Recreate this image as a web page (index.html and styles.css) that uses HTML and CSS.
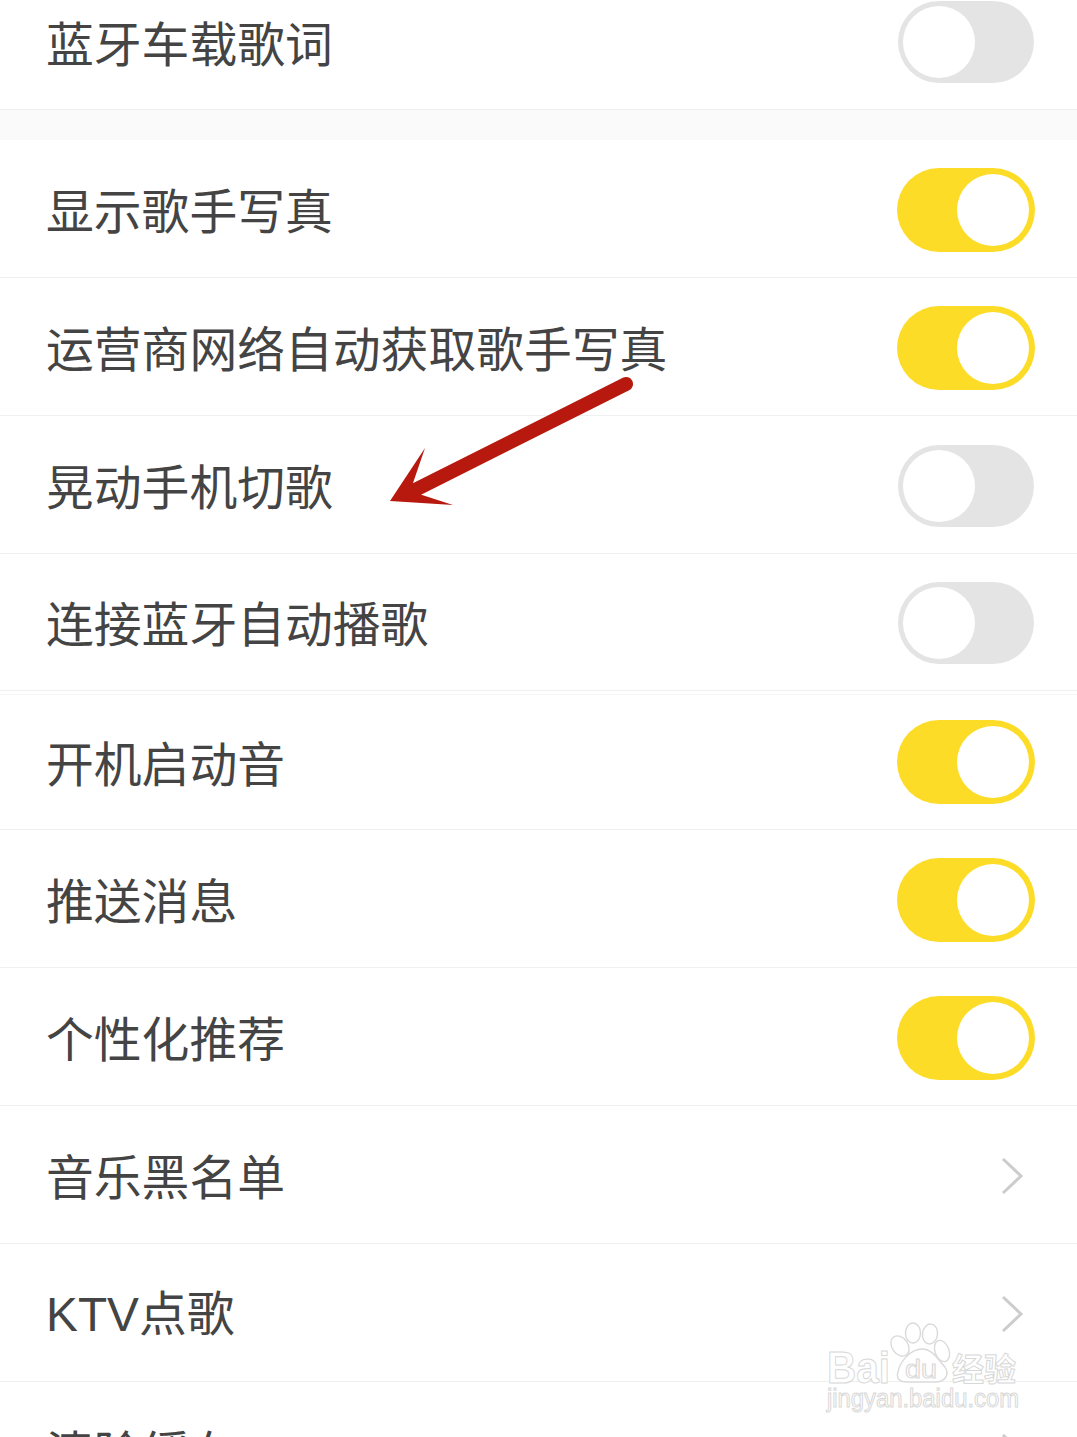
FILE: index.html
```html
<!DOCTYPE html>
<html lang="zh-CN">
<head>
<meta charset="utf-8">
<title>设置</title>
<link rel="stylesheet" href="styles.css">
</head>
<body>
<div class="page">
  <div class="list">
    <div class="row row-first"><span class="label">蓝牙车载歌词</span><span class="switch off"><i class="knob"></i></span></div>
  </div>
  <div class="gap"></div>
  <div class="list">
    <div class="row"><span class="label">显示歌手写真</span><span class="switch on"><i class="knob"></i></span></div>
    <div class="row"><span class="label">运营商网络自动获取歌手写真</span><span class="switch on"><i class="knob"></i></span></div>
    <div class="row"><span class="label">晃动手机切歌</span><span class="switch off"><i class="knob"></i></span></div>
    <div class="row row-short"><span class="label">连接蓝牙自动播歌</span><span class="switch off"><i class="knob"></i></span></div>
    <div class="row row-seam"><span class="label">开机启动音</span><span class="switch on"><i class="knob"></i></span></div>
    <div class="row"><span class="label">推送消息</span><span class="switch on"><i class="knob"></i></span></div>
    <div class="row"><span class="label">个性化推荐</span><span class="switch on"><i class="knob"></i></span></div>
    <div class="row"><span class="label">音乐黑名单</span><svg class="chev" viewBox="0 0 24 38"><path d="M3 2 L21 19 L3 36"/></svg></div>
    <div class="row"><span class="label"><span class="latin">KTV</span>点歌</span><svg class="chev" viewBox="0 0 24 38"><path d="M3 2 L21 19 L3 36"/></svg></div>
    <div class="row"><span class="label">清除缓存</span><svg class="chev" viewBox="0 0 24 38"><path d="M3 2 L21 19 L3 36"/></svg></div>
  </div>

  <svg class="arrow" viewBox="0 0 260 140">
    <path class="arrow-head" d="M5 126 L40 73 L28 108 L34 119 L68 130 Z"/>
    <line class="arrow-shaft" x1="241" y1="9" x2="30" y2="115"/>
  </svg>

  <svg class="mark" viewBox="0 0 200 100">
    <g class="paw">
      <ellipse cx="73" cy="21" rx="8" ry="11" transform="rotate(-35 73 21)"/>
      <ellipse cx="86" cy="8" rx="7.5" ry="10"/>
      <ellipse cx="103" cy="9" rx="7.5" ry="10" transform="rotate(8 103 9)"/>
      <ellipse cx="115" cy="26" rx="7" ry="11" transform="rotate(-20 115 26)"/>
      <path d="M71 47 C73 36 84 24 95 24 C106 24 112 36 118 42 C123 50 118 57 108 57 L80 57 C72 57 69 53 71 47 Z"/>
    </g>
    <text class="mark-big" x="0" y="58" textLength="63" lengthAdjust="spacingAndGlyphs">Bai</text>
    <text class="mark-du" x="78" y="53" textLength="32" lengthAdjust="spacingAndGlyphs">du</text>
    <text class="mark-cn" x="125" y="56" textLength="64" lengthAdjust="spacingAndGlyphs">经验</text>
    <text class="mark-url" x="0" y="82" textLength="192" lengthAdjust="spacingAndGlyphs">jingyan.baidu.com</text>
  </svg>
</div>
</body>
</html>
```
FILE: styles.css
```css
html, body {
  margin: 0;
  padding: 0;
  background: #fff;
}
.page {
  position: relative;
  width: 1077px;
  height: 1437px;
  overflow: hidden;
  font-family: "Noto Sans CJK SC", "Noto Sans", sans-serif;
  color: #444;
}
.list {
  display: flex;
  flex-direction: column;
}
.row {
  display: flex;
  align-items: center;
  justify-content: space-between;
  flex: none;
  height: 137px;
  padding: 0 42px 0 46px;
  border-bottom: 1px solid #f0f0f0;
  background: #fff;
}
.row-first {
  height: 84px;
  padding-bottom: 25px;
}
.row-short {
  height: 136px;
}
.row-seam {
  height: 134px;
  margin-top: 3px;
  border-top: 1px solid #f6f6f6;
}
.row-seam .switch {
  margin-top: 0;
}
.label {
  font-size: 47.8px;
  line-height: 60px;
  font-weight: 400;
  white-space: nowrap;
}
.latin {
  font-family: "Liberation Sans", sans-serif;
}
.gap {
  height: 30px;
  background: #fafafa;
}
.switch {
  display: flex;
  align-items: center;
  box-sizing: border-box;
  margin-top: 2px;
  border-radius: 42px;
}
.row-first .switch {
  margin-top: 0;
}
.switch.off {
  width: 136px;
  height: 82px;
  margin-right: 1px;
  padding: 5px;
  background: #e4e4e4;
  justify-content: flex-start;
}
.switch.on {
  width: 138px;
  height: 84px;
  padding: 6px;
  background: #fddc27;
  justify-content: flex-end;
}
.knob {
  display: block;
  width: 72px;
  height: 72px;
  border-radius: 50%;
  background: #fff;
}
.chev {
  width: 24px;
  height: 38px;
  margin-top: 2px;
  margin-right: 11px;
}
.chev path {
  fill: none;
  stroke: #ccc;
  stroke-width: 3;
}
.arrow {
  position: absolute;
  left: 385px;
  top: 375px;
  width: 260px;
  height: 140px;
}
.arrow-head {
  fill: #b8190e;
}
.arrow-shaft {
  stroke: #b8190e;
  stroke-width: 14;
  stroke-linecap: round;
}
.mark {
  position: absolute;
  left: 827px;
  top: 1325px;
  width: 200px;
  height: 100px;
  overflow: visible;
}
.paw {
  fill: #fff;
  stroke: #dadada;
  stroke-width: 1.4;
}
.mark text {
  font-family: "Liberation Sans", sans-serif;
  fill: #fff;
  stroke: #d8d8d8;
  stroke-width: 1;
}
.mark-big {
  font-size: 45px;
  font-weight: 700;
}
.mark-du {
  font-size: 25px;
}
.mark .mark-cn {
  font-family: "Noto Sans CJK SC", sans-serif;
  font-size: 32px;
  font-weight: 700;
}
.mark-url {
  font-size: 25px;
}
```
